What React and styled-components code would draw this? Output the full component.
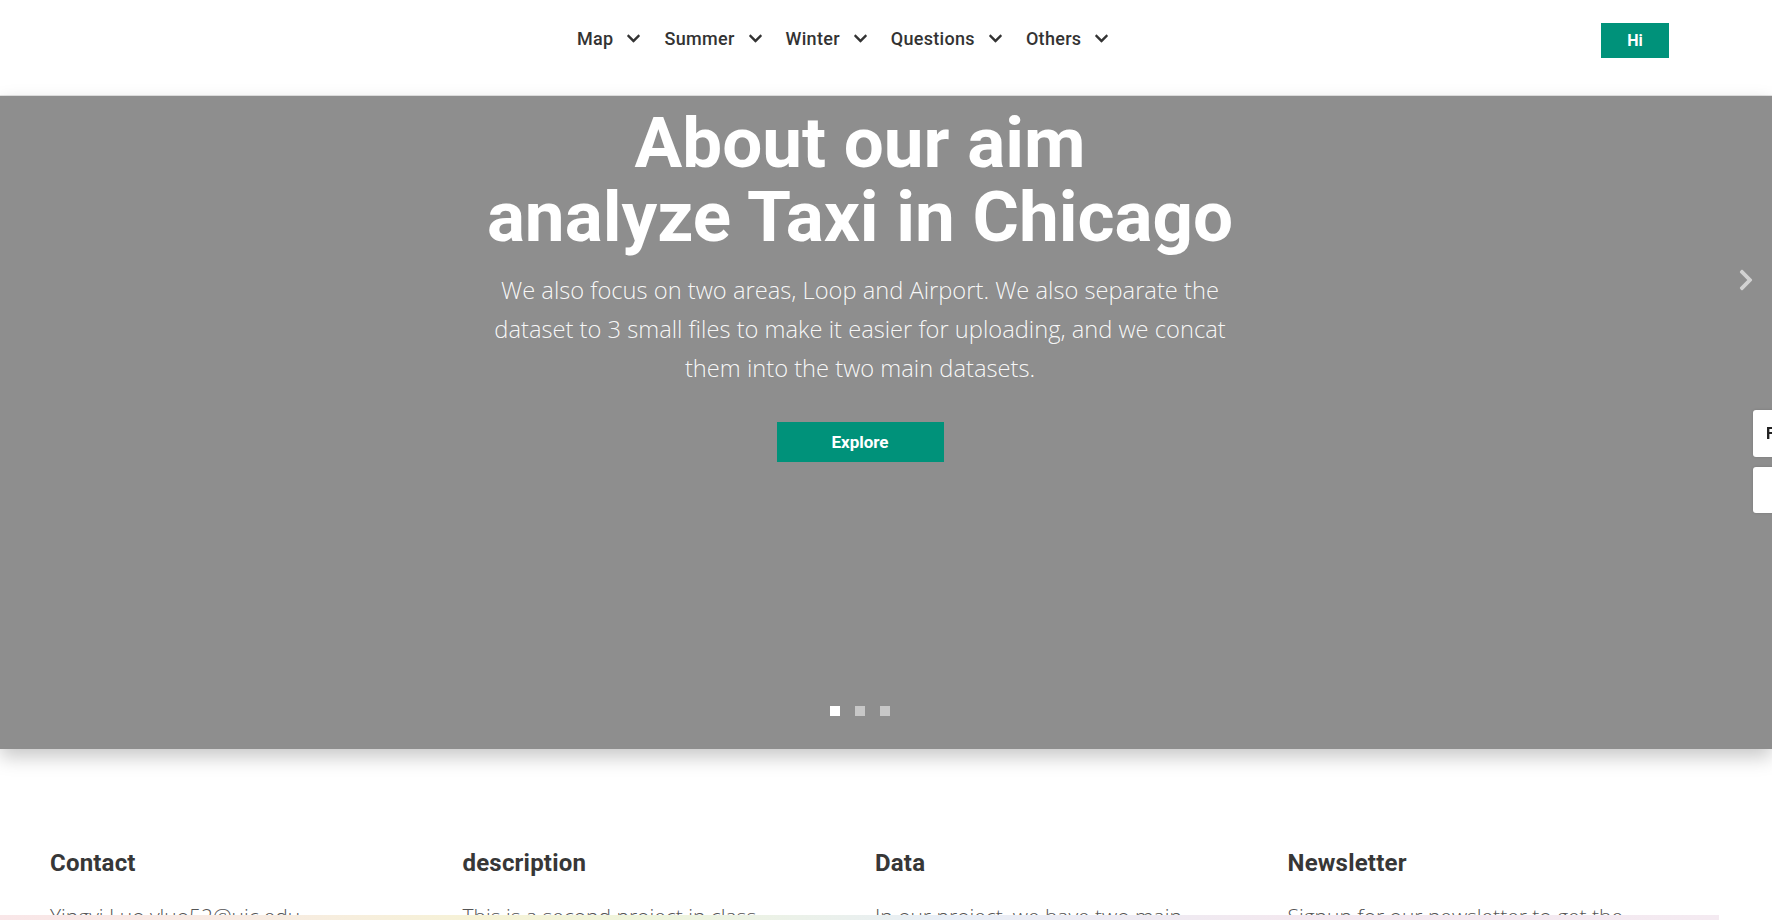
import React from "react";
import styled, { createGlobalStyle } from "styled-components";
import { FaChevronDown, FaChevronRight } from "react-icons/fa";

const GlobalStyle = createGlobalStyle`
  html, body {
    margin: 0;
    padding: 0;
    background: #fff;
    font-family: Roboto, "Liberation Sans", sans-serif;
    overflow: hidden;
  }
`;

const Page = styled.div`
  width: 1772px;
  min-height: 920px;
`;

const Header = styled.header`
  height: 96px;
  border-bottom: 1px solid #e4e4e4;
  display: flex;
  align-items: flex-start;
  justify-content: space-between;
  padding: 23px 103px 0 577px;
  box-sizing: border-box;
`;

const Nav = styled.nav`
  display: flex;
  align-items: center;
  gap: 23px;
  margin-top: 5px;
`;

const NavItem = styled.a`
  display: flex;
  align-items: center;
  gap: 13px;
  font-size: 18px;
  font-weight: 500;
  letter-spacing: 0.3px;
  color: #333;
  cursor: pointer;
  svg {
    width: 15px;
    height: 15px;
  }
`;

const HiButton = styled.button`
  width: 68px;
  height: 35px;
  border: none;
  background: #00927a;
  color: #fff;
  font-family: Roboto, sans-serif;
  font-weight: 700;
  font-size: 16px;
`;

const Hero = styled.section`
  position: relative;
  height: 653px;
  background: #8e8e8e;
  box-shadow: 0 8px 18px rgba(0, 0, 0, 0.22);
  z-index: 1;
`;

const HeroInner = styled.div`
  width: 1720px;
  display: flex;
  flex-direction: column;
  align-items: center;
  text-align: center;
  padding-top: 10px;
`;

const Title = styled.h1`
  margin: 0;
  font-size: 71px;
  line-height: 74px;
  font-weight: 700;
  color: #fff;
`;

const Lead = styled.p`
  margin: 17px 0 0;
  width: 760px;
  font-family: "Open Sans", sans-serif;
  font-weight: 300;
  font-size: 23.7px;
  line-height: 39px;
  color: rgba(255, 255, 255, 0.95);
`;

const Explore = styled.button`
  margin-top: 34px;
  width: 167px;
  height: 40px;
  border: none;
  background: #00927a;
  color: #fff;
  font-family: Roboto, sans-serif;
  font-weight: 700;
  font-size: 17px;
`;

const NextArrow = styled.div`
  position: absolute;
  right: 18px;
  top: 172px;
  color: #d2d2d2;
  svg {
    width: 16px;
    height: 24px;
  }
`;

const Dots = styled.div`
  position: absolute;
  bottom: 33px;
  left: 0;
  width: 1720px;
  display: flex;
  justify-content: center;
  gap: 15px;
`;

const Dot = styled.span`
  width: 10px;
  height: 10px;
  background: ${(p) => (p.active ? "#fff" : "rgba(255,255,255,0.5)")};
`;

const Footer = styled.footer`
  display: grid;
  grid-template-columns: repeat(4, 412.5px);
  padding: 99px 0 0 50px;
`;

const Column = styled.div`
  h3 {
    margin: 0;
    font-size: 24px;
    font-weight: 700;
    letter-spacing: 0.2px;
    color: #373737;
    line-height: 30px;
  }
  p {
    margin: 24px 0 0;
    font-family: "Open Sans", sans-serif;
    font-size: 21px;
    font-weight: 300;
    color: #555;
    line-height: 28px;
  }
`;

const SideTab = styled.div`
  position: fixed;
  right: -6px;
  top: ${(p) => p.top}px;
  width: 25px;
  height: ${(p) => p.h}px;
  background: #fff;
  border-radius: 3px 0 0 3px;
  box-shadow: 0 0 3px rgba(0, 0, 0, 0.15);
  font-weight: 700;
  font-size: 16px;
  line-height: ${(p) => p.h}px;
  color: #222;
  padding-left: 13px;
  box-sizing: border-box;
  z-index: 5;
`;

const BottomStrip = styled.div`
  position: fixed;
  left: 0;
  bottom: 0;
  width: 1719px;
  height: 5px;
  background: linear-gradient(
    90deg,
    #f9e6e8 0%,
    #f7ebe2 15%,
    #f6f2d6 28%,
    #eef4dc 38%,
    #e8eef6 55%,
    #f3e8ef 75%,
    #f4eaf1 100%
  );
  z-index: 5;
`;

const menu = ["Map", "Summer", "Winter", "Questions", "Others"];

const columns = [
  { title: "Contact", text: "Yingyi Luo yluo52@uic.edu" },
  { title: "description", text: "This is a second project in class" },
  { title: "Data", text: "In our project, we have two main" },
  { title: "Newsletter", text: "Signup for our newsletter to get the" },
];

export default function App() {
  return (
    <Page>
      <GlobalStyle />
      <Header>
        <Nav>
          {menu.map((m) => (
            <NavItem key={m}>
              {m}
              <FaChevronDown />
            </NavItem>
          ))}
        </Nav>
        <HiButton>Hi</HiButton>
      </Header>
      <Hero>
        <HeroInner>
          <Title>
            About our aim
            <br />
            analyze Taxi in Chicago
          </Title>
          <Lead>
            We also focus on two areas, Loop and Airport. We also separate the
            dataset to 3 small files to make it easier for uploading, and we
            concat them into the two main datasets.
          </Lead>
          <Explore>Explore</Explore>
        </HeroInner>
        <NextArrow>
          <FaChevronRight />
        </NextArrow>
        <Dots>
          <Dot active />
          <Dot />
          <Dot />
        </Dots>
      </Hero>
      <Footer>
        {columns.map((c) => (
          <Column key={c.title}>
            <h3>{c.title}</h3>
            <p>{c.text}</p>
          </Column>
        ))}
      </Footer>
      <SideTab top={410} h={47}>F</SideTab>
      <SideTab top={467} h={46} />
      <BottomStrip />
    </Page>
  );
}
